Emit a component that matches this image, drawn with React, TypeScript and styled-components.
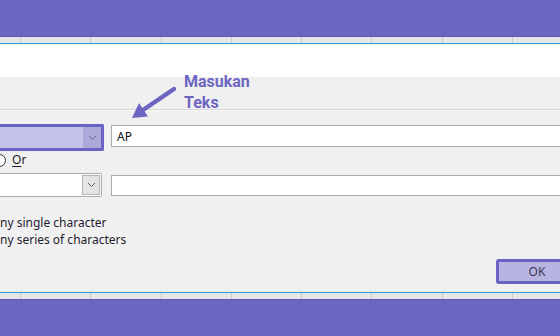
import styled, { createGlobalStyle } from "styled-components";

const GlobalStyle = createGlobalStyle`
    html, body {
        margin: 0;
        padding: 0;
        background: #f0f0f0;
    }
`;

const PURPLE = "#6c66c2";

const Page = styled.div`
    position: relative;
    width: 560px;
    height: 336px;
    overflow: hidden;
    display: flex;
    flex-direction: column;
    background: #f0f0f0;
    font-family: "Noto Sans", "Open Sans", sans-serif;
    color: #1c1c2e;
`;

const Band = styled.div<{ $h: number; $top?: boolean }>`
    height: ${(p) => p.$h}px;
    flex-shrink: 0;
    background: ${PURPLE};
    box-sizing: border-box;
    ${(p) => (p.$top ? "border-bottom: 1px solid #5b55b3;" : "border-top: 1px solid #5b55b3;")}
`;

const HeaderStrip = styled.div<{ $blueTop?: boolean }>`
    display: flex;
    height: 7px;
    flex-shrink: 0;
    box-sizing: border-box;
    background: #e6e6e6;
    ${(p) =>
        p.$blueTop
            ? "border-top: 1px solid #3d98dc;"
            : "border-bottom: 1px solid #3d98dc;"}
`;

const HeaderCell = styled.div<{ $w: number }>`
    width: ${(p) => p.$w}px;
    flex-shrink: 0;
    border-right: 1px solid #c6c6c6;
    box-sizing: border-box;
`;

const WhiteArea = styled.div`
    height: 33px;
    flex-shrink: 0;
    background: #ffffff;
`;

const Dialog = styled.div`
    height: 215px;
    flex-shrink: 0;
    display: flex;
    flex-direction: column;
    padding-top: 32px;
    box-sizing: border-box;
    font-size: 12px;
`;

const Rule = styled.div`
    height: 1px;
    background: #d9d9d9;
    border-bottom: 1px solid #f8f8f8;
`;

const FieldRow = styled.div<{ $mt: number; $gap: number }>`
    display: flex;
    align-items: flex-start;
    gap: ${(p) => p.$gap}px;
    margin-top: ${(p) => p.$mt}px;
`;

const Combo = styled.div<{ $active?: boolean }>`
    display: flex;
    flex-shrink: 0;
    justify-content: flex-end;
    width: ${(p) => (p.$active ? 104 : 102)}px;
    height: ${(p) => (p.$active ? 27 : 24)}px;
    box-sizing: border-box;
    border: ${(p) => (p.$active ? `3px solid #6a63c4` : "1px solid #acacac")};
    border-left: none;
    border-radius: 0 2px 2px 0;
    background: ${(p) => (p.$active ? "#c5c2e9" : "#ffffff")};
    padding: ${(p) => (p.$active ? "0" : "0 1px 0 0")};
`;

const DropButton = styled.div<{ $active?: boolean }>`
    width: 18px;
    display: flex;
    align-items: center;
    justify-content: center;
    box-sizing: border-box;
    background: ${(p) => (p.$active ? "#aca8d8" : "#e4e4e4")};
    border: ${(p) => (p.$active ? "none" : "1px solid #b4b4b4")};
    margin: ${(p) => (p.$active ? "0" : "1px 0")};
`;

const TextBox = styled.div<{ $mt: number }>`
    width: 470px;
    flex-shrink: 0;
    height: ${(p) => (p.$mt === 1 ? 22 : 21)}px;
    margin-top: ${(p) => p.$mt}px;
    box-sizing: border-box;
    border: 1px solid #ababab;
    background: #ffffff;
    padding-left: 5px;
    display: flex;
    align-items: center;
    font-size: 12px;
    color: #111;
`;

const RadioRow = styled.div`
    display: flex;
    align-items: center;
    gap: 6px;
    height: 14px;
    margin-top: 2px;
`;

const RadioCircle = styled.div`
    width: 13px;
    height: 13px;
    margin-left: -7px;
    border-radius: 50%;
    border: 1px solid #333;
    box-sizing: border-box;
    background: #fff;
`;

const RadioLabel = styled.span`
    font-size: 12px;
    line-height: 14px;
    & u {
        text-underline-offset: 2px;
    }
`;

const Hints = styled.div`
    margin-top: 17px;
    line-height: 17px;
    font-size: 12px;
`;

const ButtonRow = styled.div`
    display: flex;
    justify-content: flex-end;
    margin-top: 11px;
    margin-right: -18px;
`;

const OkButton = styled.div`
    width: 82px;
    height: 25px;
    box-sizing: border-box;
    border: 3px solid #6a63c4;
    border-radius: 3px;
    background: #b8b4e1;
    display: flex;
    align-items: center;
    justify-content: center;
    font-size: 12px;
    color: #3a3a58;
`;

const Callout = styled.div`
    position: absolute;
    left: 184px;
    top: 71px;
    font-family: Roboto, "Noto Sans", sans-serif;
    font-size: 16px;
    font-weight: 700;
    line-height: 21px;
    color: ${PURPLE};
`;

const ArrowLayer = styled.svg`
    position: absolute;
    left: 0;
    top: 0;
    pointer-events: none;
`;

function Chevron({ color }: { color: string }) {
    return (
        <svg width="9" height="6" viewBox="0 0 9 6">
            <polyline points="1,1 4.5,4.5 8,1" fill="none" stroke={color} strokeWidth="1" />
        </svg>
    );
}

function Strip({ blueTop }: { blueTop?: boolean }) {
    const widths = [21, 70, 71, 70, 70, 70, 71, 70, 70];
    return (
        <HeaderStrip $blueTop={blueTop}>
            {widths.map((w, i) => (
                <HeaderCell key={i} $w={w} />
            ))}
        </HeaderStrip>
    );
}

export default function App() {
    return (
        <Page>
            <GlobalStyle />
            <Band $h={37} $top />
            <Strip />
            <WhiteArea />
            <Dialog>
                <Rule />
                <FieldRow $mt={13} $gap={7}>
                    <Combo $active>
                        <DropButton $active>
                            <Chevron color="#6d6a8e" />
                        </DropButton>
                    </Combo>
                    <TextBox $mt={1}>AP</TextBox>
                </FieldRow>
                <RadioRow>
                    <RadioCircle />
                    <RadioLabel>
                        <u>O</u>r
                    </RadioLabel>
                </RadioRow>
                <FieldRow $mt={6} $gap={9}>
                    <Combo>
                        <DropButton>
                            <Chevron color="#606060" />
                        </DropButton>
                    </Combo>
                    <TextBox $mt={2} />
                </FieldRow>
                <Hints>
                    <div>ny single character</div>
                    <div>ny series of characters</div>
                </Hints>
                <ButtonRow>
                    <OkButton>OK</OkButton>
                </ButtonRow>
            </Dialog>
            <Strip blueTop />
            <Band $h={39} />
            <Callout>
                Masukan
                <br />
                Teks
            </Callout>
            <ArrowLayer width="560" height="336" viewBox="0 0 560 336">
                <line x1="174" y1="89" x2="143" y2="110" stroke={PURPLE} strokeWidth="4.5" strokeLinecap="round" />
                <polygon points="132,118 148,116.5 139,103" fill={PURPLE} />
            </ArrowLayer>
        </Page>
    );
}
